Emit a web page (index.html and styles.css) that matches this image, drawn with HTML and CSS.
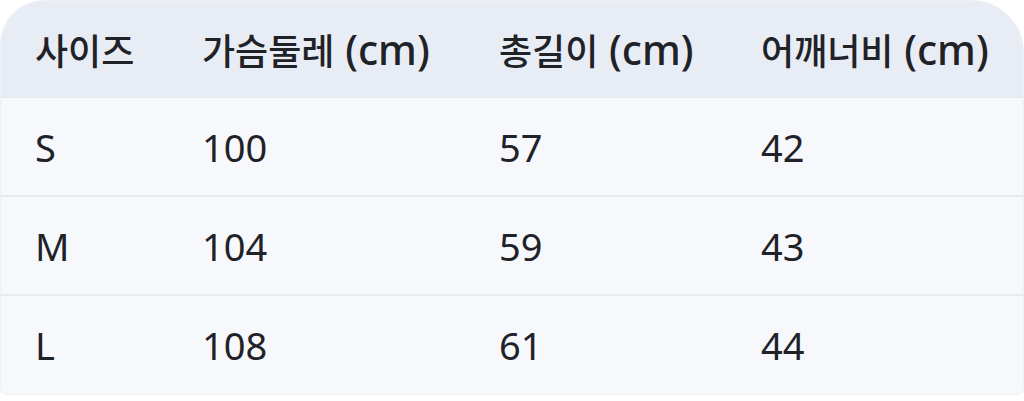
FILE: index.html
```html
<!DOCTYPE html>
<html lang="ko">
<head>
<meta charset="utf-8">
<link rel="stylesheet" href="styles.css">
</head>
<body>
<div class="table">
  <div class="row head">
    <div class="cell"><span class="ko">사이즈</span></div>
    <div class="cell"><span class="ko">가슴둘레</span> (cm)</div>
    <div class="cell"><span class="ko">총길이</span> (cm)</div>
    <div class="cell"><span class="ko">어깨너비</span> (cm)</div>
  </div>
  <div class="row">
    <div class="cell">S</div>
    <div class="cell">100</div>
    <div class="cell">57</div>
    <div class="cell">42</div>
  </div>
  <div class="row">
    <div class="cell">M</div>
    <div class="cell">104</div>
    <div class="cell">59</div>
    <div class="cell">43</div>
  </div>
  <div class="row last">
    <div class="cell">L</div>
    <div class="cell">108</div>
    <div class="cell">61</div>
    <div class="cell">44</div>
  </div>
</div>
</body>
</html>
```
FILE: styles.css
```css
html, body {
  margin: 0;
  padding: 0;
  background: #ffffff;
}
body {
  font-family: "Noto Sans", "Noto Sans CJK KR", sans-serif;
  color: #1f2227;
}
.table {
  width: 1024px;
  box-sizing: border-box;
  background: #f7f8fc;
  border: 1px solid #eef0f4;
  border-radius: 44px 52px 6px 6px;
  overflow: hidden;
}
.row {
  display: grid;
  grid-template-columns: 167px 297px 262px 1fr;
  height: 99px;
  align-items: center;
  border-bottom: 2px solid #e8eaef;
  box-sizing: border-box;
}
.row.head {
  height: 97px;
  background: #e8ecf4;
  border-bottom: 1px solid #e3e7ef;
}
.row.last {
  border-bottom: none;
  height: 98px;
}
.cell {
  padding-left: 34px;
  font-size: 38px;
  line-height: 1;
  white-space: nowrap;
}
.head .cell {
  font-size: 41px;
  font-weight: 500;
}
.head .ko {
  font-size: 36px;
}
```
